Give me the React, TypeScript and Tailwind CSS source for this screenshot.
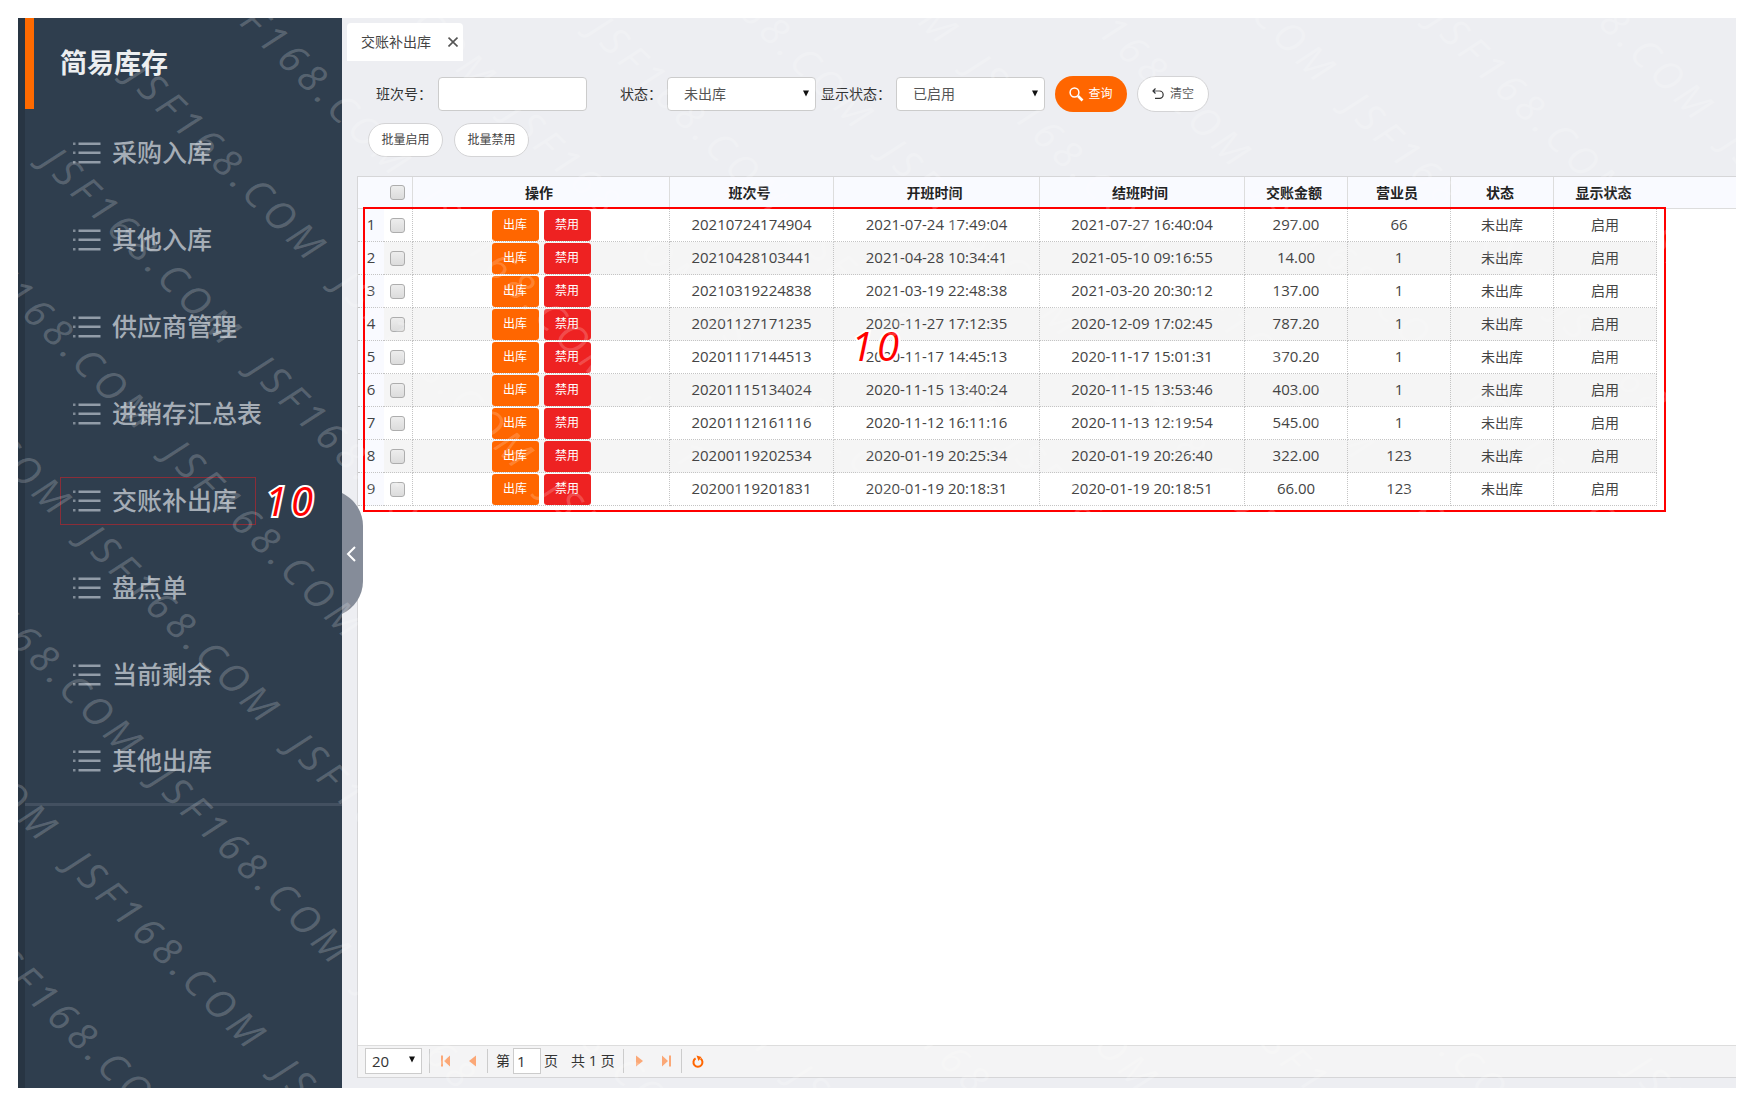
import { useState } from 'react';
import { clsx } from 'clsx';

const menuItems = ['采购入库', '其他入库', '供应商管理', '进销存汇总表', '交账补出库', '盘点单', '当前剩余', '其他出库'];

interface ShiftRow {
  shiftNo: string;
  openedAt: string;
  closedAt: string;
  amount: string;
  clerk: string;
}

const rows: ShiftRow[] = [
  { shiftNo: '20210724174904', openedAt: '2021-07-24 17:49:04', closedAt: '2021-07-27 16:40:04', amount: '297.00', clerk: '66' },
  { shiftNo: '20210428103441', openedAt: '2021-04-28 10:34:41', closedAt: '2021-05-10 09:16:55', amount: '14.00', clerk: '1' },
  { shiftNo: '20210319224838', openedAt: '2021-03-19 22:48:38', closedAt: '2021-03-20 20:30:12', amount: '137.00', clerk: '1' },
  { shiftNo: '20201127171235', openedAt: '2020-11-27 17:12:35', closedAt: '2020-12-09 17:02:45', amount: '787.20', clerk: '1' },
  { shiftNo: '20201117144513', openedAt: '2020-11-17 14:45:13', closedAt: '2020-11-17 15:01:31', amount: '370.20', clerk: '1' },
  { shiftNo: '20201115134024', openedAt: '2020-11-15 13:40:24', closedAt: '2020-11-15 13:53:46', amount: '403.00', clerk: '1' },
  { shiftNo: '20201112161116', openedAt: '2020-11-12 16:11:16', closedAt: '2020-11-13 12:19:54', amount: '545.00', clerk: '1' },
  { shiftNo: '20200119202534', openedAt: '2020-01-19 20:25:34', closedAt: '2020-01-19 20:26:40', amount: '322.00', clerk: '123' },
  { shiftNo: '20200119201831', openedAt: '2020-01-19 20:18:31', closedAt: '2020-01-19 20:18:51', amount: '66.00', clerk: '123' },
];

const headers = ['班次号', '开班时间', '结班时间', '交账金额', '营业员', '状态', '显示状态'];

function ListIcon() {
  return (
    <svg width="28" height="22" viewBox="0 0 28 22" fill="#929ca8" aria-hidden="true">
      {[0.5, 9.5, 19].map((y) => (
        <g key={y}>
          <rect x="0" y={y} width="2.5" height="2.5" opacity="0.8" />
          <rect x="5.5" y={y} width="22" height="2.5" />
        </g>
      ))}
    </svg>
  );
}

function Marker({ className }: { className?: string }) {
  return (
    <span
      className={clsx(
        'pointer-events-none absolute text-[40px] leading-10 font-medium italic tracking-widest text-[#ff0000] [-webkit-text-stroke:4px_white] [paint-order:stroke_fill]',
        className
      )}
    >
      10
    </span>
  );
}

function Sidebar() {
  return (
    <aside className="relative w-[324px] shrink-0 border-l-[7px] border-[#283543] bg-[#2f3e4e]">
      <h1 className="flex h-[91px] items-center border-l-[9px] border-[#ff6a00] pl-[26px] text-[27px] font-bold text-[#eceef0]">
        简易库存
      </h1>
      <nav className="border-b-[3px] border-[#435060]">
        <ul>
          {menuItems.map((item) => (
            <li key={item} className="relative flex h-[87px] items-center pl-[35px] last:h-[85px]">
              <a
                href="#"
                className={clsx(
                  'flex h-12 items-center gap-[11px] border pr-[18px] pl-3 text-[25px] font-medium text-[#a5adb6]',
                  item === '交账补出库' ? 'border-[#8a2d38]' : 'border-transparent'
                )}
              >
                <ListIcon />
                {item}
              </a>
              {item === '交账补出库' && <Marker className="top-6 left-[240px]" />}
            </li>
          ))}
        </ul>
      </nav>
      <button type="button" aria-label="收起菜单" className="absolute top-[475px] left-full z-10 h-[121px] w-[21px]">
        <svg width="21" height="121" viewBox="0 0 21 121" fill="none" aria-hidden="true">
          <path d="M0 0 C12 6 21 18 21 33 V88 C21 103 12 115 0 121 Z" fill="#858c99" />
          <path d="M13 54 L6 61 L13 68" stroke="white" strokeWidth="2" />
        </svg>
      </button>
    </aside>
  );
}

function Caret({ className }: { className?: string }) {
  return (
    <svg width="8" height="7" viewBox="0 0 8 7" className={clsx('pointer-events-none absolute', className)} aria-hidden="true">
      <path d="M1 0.5 H7 L4 6.5 Z" fill="#111" />
    </svg>
  );
}

function FilterSelect({ id, label, value }: { id: string; label: string; value: string }) {
  return (
    <div className="flex items-center gap-[5px]">
      <label htmlFor={id}>{label}</label>
      <div className="relative">
        <select
          id={id}
          className="h-[34px] w-[149px] appearance-none rounded border border-[#ccc] bg-white pl-4 text-sm text-[#555]"
        >
          <option>{value}</option>
        </select>
        <Caret className="top-[13px] right-[6px]" />
      </div>
    </div>
  );
}

function FilterBar() {
  return (
    <form className="mt-[15px]" onSubmit={(e) => e.preventDefault()}>
      <div className="flex items-center pl-[34px] text-sm text-[#333]">
        <div className="mr-[33px] flex items-center gap-[6px]">
          <label htmlFor="shift-no">班次号：</label>
          <input id="shift-no" type="text" className="h-[34px] w-[149px] rounded border border-[#ccc] bg-white px-3" />
        </div>
        <div className="flex items-center gap-[5px]">
          <FilterSelect id="status" label="状态：" value="未出库" />
          <FilterSelect id="visible" label="显示状态：" value="已启用" />
        </div>
        <button
          type="submit"
          className="ml-[10px] flex h-9 w-[72px] items-center justify-center gap-1 rounded-full bg-[#ff6600] text-xs text-white"
        >
          <svg width="15" height="15" viewBox="0 0 15 15" fill="none" stroke="currentColor" aria-hidden="true">
            <circle cx="5.5" cy="5.5" r="4.4" strokeWidth="1.5" />
            <path d="M9 9 L13.5 13.5" strokeWidth="2.6" />
          </svg>
          查询
        </button>
        <button
          type="reset"
          className="ml-[10px] flex h-9 w-[72px] items-center justify-center gap-[6px] rounded-full border border-[#d4d4d6] bg-white text-xs text-[#555]"
        >
          <svg width="12" height="12" viewBox="0 0 12 12" fill="none" stroke="#333" strokeWidth="1.2" aria-hidden="true">
            <path d="M3.5 0.5 L1 3 L3.5 5.5 M1 3 H7.5 A3.6 3.6 0 0 1 7.5 10.3 H3" />
          </svg>
          清空
        </button>
      </div>
      <div className="mt-[11px] flex gap-[11px] pl-[26px]">
        {['批量启用', '批量禁用'].map((label) => (
          <button
            key={label}
            type="button"
            className="h-[34px] w-[75px] rounded-full border border-[#d4d4d6] bg-white text-xs text-[#444]"
          >
            {label}
          </button>
        ))}
      </div>
    </form>
  );
}

function Check({ label, checked, onChange }: { label: string; checked: boolean; onChange: () => void }) {
  return (
    <input
      type="checkbox"
      aria-label={label}
      checked={checked}
      onChange={onChange}
      className="block size-[15px] appearance-none rounded-[3px] border border-[#adadad] bg-linear-to-b from-[#ededed] to-[#dcdcdc] checked:from-[#999] checked:to-[#777]"
    />
  );
}

function ShiftTable() {
  const [selected, setSelected] = useState<string[]>([]);
  const toggle = (no: string) =>
    setSelected((prev) => (prev.includes(no) ? prev.filter((n) => n !== no) : [...prev, no]));
  const allSelected = selected.length === rows.length;

  const cell = 'border-r border-b border-dotted border-[#c4c4c4] p-0';

  return (
    <table className="w-full table-fixed border-separate border-spacing-0 text-center text-sm text-[#444]">
      <colgroup>
        <col className="w-[26px]" />
        <col className="w-[29px]" />
        <col className="w-[257px]" />
        <col className="w-[164px]" />
        <col className="w-[206px]" />
        <col className="w-[205px]" />
        <col className="w-[103px]" />
        <col className="w-[103px]" />
        <col className="w-[103px]" />
        <col className="w-[103px]" />
        <col />
      </colgroup>
      <thead>
        <tr className="h-8 bg-[#f9faff] text-[#222]">
          <th className="border-b border-[#ddd] p-0" />
          <th className="border-r border-b border-[#ddd] p-0 pl-[6px]">
            <Check
              label="全选"
              checked={allSelected}
              onChange={() => setSelected(allSelected ? [] : rows.map((r) => r.shiftNo))}
            />
          </th>
          <th className="border-r border-b border-[#ddd] p-0 pr-1">操作</th>
          {headers.map((h) => (
            <th key={h} className="border-r border-b border-[#ddd] p-0 pr-1 nth-[10]:border-r-0">
              {h}
            </th>
          ))}
          <td className="border-b border-[#ddd] p-0" />
        </tr>
      </thead>
      <tbody>
        {rows.map((row, i) => (
          <tr key={row.shiftNo} className="h-[33px] even:bg-[#f5f5f5]">
            <td className="border-b border-dotted border-[#c4c4c4] bg-[#f9faff] p-0 text-[15px]">{i + 1}</td>
            <td className={clsx(cell, 'pl-[6px]')}>
              <Check label={row.shiftNo} checked={selected.includes(row.shiftNo)} onChange={() => toggle(row.shiftNo)} />
            </td>
            <td className={cell}>
              <div className="flex justify-center gap-[5px]">
                <button type="button" className="h-[31px] w-[47px] rounded-[3px] bg-[#ff6600] text-xs text-white">
                  出库
                </button>
                <button type="button" className="h-[31px] w-[47px] rounded-[3px] bg-[#ee2222] text-xs text-white">
                  禁用
                </button>
              </div>
            </td>
            <td className={clsx(cell, 'text-[15px]')}>{row.shiftNo}</td>
            <td className={clsx(cell, 'text-[15px]')}>{row.openedAt}</td>
            <td className={clsx(cell, 'text-[15px]')}>{row.closedAt}</td>
            <td className={clsx(cell, 'text-[15px]')}>{row.amount}</td>
            <td className={clsx(cell, 'text-[15px]')}>{row.clerk}</td>
            <td className={cell}>未出库</td>
            <td className={cell}>启用</td>
            <td className="bg-white p-0" />
          </tr>
        ))}
      </tbody>
    </table>
  );
}

function Divider() {
  return <span className="h-6 w-px bg-[#ccc]" />;
}

function Pager() {
  const [page, setPage] = useState('1');
  const arrow = 'flex size-[27px] items-center justify-center text-[#fba877]';

  return (
    <div className="flex h-8 items-center border-t border-[#ddd] bg-[#f4f4f5] pb-px pl-[7px] text-[15px] text-[#333]">
      <div className="relative mr-[7px]">
        <select aria-label="每页条数" className="h-[26px] w-[57px] appearance-none border border-[#ccc] bg-white pl-[6px]">
          <option>20</option>
          <option>50</option>
        </select>
        <Caret className="top-2 right-[6px]" />
      </div>
      <Divider />
      <div className="flex w-[57px] pl-0.5">
        <button type="button" aria-label="首页" className={arrow}>
          <svg width="9" height="12" viewBox="0 0 9 12" fill="currentColor" aria-hidden="true">
            <path d="M0 0.5 H2 V11.5 H0 Z M9 0.5 V11.5 L3 6 Z" />
          </svg>
        </button>
        <button type="button" aria-label="上一页" className={arrow}>
          <svg width="7" height="12" viewBox="0 0 7 12" fill="currentColor" aria-hidden="true">
            <path d="M7 0.5 V11.5 L0 6 Z" />
          </svg>
        </button>
      </div>
      <Divider />
      <label htmlFor="page" className="ml-2 text-sm">第</label>
      <input
        id="page"
        value={page}
        onChange={(e) => setPage(e.target.value)}
        className="mx-[3px] h-[26px] w-[28px] border border-[#ccc] bg-white pl-[3px]"
      />
      <span className="mr-[13px] text-sm">页</span>
      <span className="mr-2 text-sm">共 <span className="text-[15px]">1</span> 页</span>
      <Divider />
      <div className="flex w-[57px] pl-0.5">
        <button type="button" aria-label="下一页" className={arrow}>
          <svg width="7" height="12" viewBox="0 0 7 12" fill="currentColor" aria-hidden="true">
            <path d="M0 0.5 V11.5 L7 6 Z" />
          </svg>
        </button>
        <button type="button" aria-label="末页" className={arrow}>
          <svg width="9" height="12" viewBox="0 0 9 12" fill="currentColor" aria-hidden="true">
            <path d="M7 0.5 H9 V11.5 H7 Z M0 0.5 V11.5 L6 6 Z" />
          </svg>
        </button>
      </div>
      <Divider />
      <button type="button" aria-label="刷新" className="ml-[10px] text-[#ff6600]">
        <svg width="12" height="13" viewBox="0 0 12 13" fill="none" aria-hidden="true">
          <path d="M8.6 3.6 A4.5 4.5 0 1 1 3.6 3.4" stroke="currentColor" strokeWidth="2" />
          <path d="M4.5 0.5 L9.5 2 L6.5 6 Z" fill="currentColor" />
        </svg>
      </button>
    </div>
  );
}

// Repeated 45° stamps; u runs along the text, v across the lines.
function Watermark() {
  const stamps: { u: number; v: number }[] = [];
  for (let line = -11; line <= 8; line++) {
    for (let col = -2; col <= 7; col++) {
      const u = col * 294 + (line >= 4 ? 45 : 118);
      const v = line * 120 - 32;
      const x = (u - v) * Math.SQRT1_2;
      const y = (u + v) * Math.SQRT1_2;
      // the corner behind the menu title stays clear
      if (x + y < -150) continue;
      if (x > -200 && x < 1720 && y > -200 && y < 1070) stamps.push({ u, v });
    }
  }
  return (
    <svg className="pointer-events-none absolute inset-0 z-20 size-full" aria-hidden="true">
      <g transform="rotate(45)" className="fill-white/20 text-[39px] italic tracking-[0.15em]">
        {stamps.map(({ u, v }) => (
          <text key={`${u}/${v}`} x={u} y={v}>JSF168.COM</text>
        ))}
      </g>
    </svg>
  );
}

export default function App() {
  return (
    <div className="flex min-h-screen bg-white p-[18px] font-['Open_Sans','Noto_Sans_CJK_SC',sans-serif]">
      <div className="relative flex min-w-0 flex-1 overflow-hidden bg-[#edeef2]">
        <Sidebar />
        <main className="flex min-w-0 flex-1 flex-col pt-[5px] pb-[10px]">
          <div className="ml-[5px] flex h-[38px] w-[116px] items-center justify-between rounded-t bg-white pr-[5px] pl-[14px] text-sm text-[#444]">
            交账补出库
            <button type="button" aria-label="关闭">
              <svg width="10" height="10" viewBox="0 0 10 10" stroke="#555" strokeWidth="1.6" aria-hidden="true">
                <path d="M0.5 0.5 L9.5 9.5 M9.5 0.5 L0.5 9.5" />
              </svg>
            </button>
          </div>
          <FilterBar />
          <section className="relative mt-[19px] ml-[15px] flex flex-1 flex-col overflow-hidden border-y border-l border-[#d6d6d8] bg-white">
            <div className="flex-1">
              <ShiftTable />
            </div>
            <Pager />
            <div className="pointer-events-none absolute top-[30px] left-[5px] h-[305px] w-[1303px] border-2 border-[#ff0000]" />
            <Marker className="top-[149px] left-[493px]" />
          </section>
        </main>
        <Watermark />
      </div>
    </div>
  );
}
